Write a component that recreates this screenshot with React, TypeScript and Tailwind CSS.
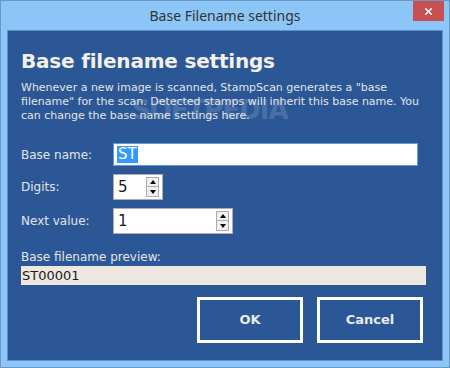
import { X } from "lucide-react";

const ui = { fontFamily: '"DejaVu Sans", Verdana, sans-serif' };

function SpinButtons() {
  return (
    <div className="flex flex-col gap-0">
      <div className="w-[13px] h-[10px] border border-[#adadad] bg-[#f0f0f0] flex items-center justify-center">
        <div className="w-0 h-0 border-x-[3px] border-x-transparent border-b-[4px] border-b-black" />
      </div>
      <div className="w-[13px] h-[10px] border border-t-0 border-[#adadad] bg-[#f0f0f0] flex items-center justify-center">
        <div className="w-0 h-0 border-x-[3px] border-x-transparent border-t-[4px] border-t-black" />
      </div>
    </div>
  );
}

function Spinner({ value, width }: { value: string; width: string }) {
  return (
    <div className={`${width} h-[26px] bg-white border border-[#abadb3] flex items-center justify-between pl-[4px] pr-[3px]`}>
      <span className="text-[15px] text-[#1a1a1a] leading-none">{value}</span>
      <SpinButtons />
    </div>
  );
}

export default function App() {
  return (
    <div className="w-[450px] h-[368px] bg-[#8cc6f7] border border-[#6b97c4] flex flex-col overflow-hidden" style={ui}>
      {/* title bar */}
      <div className="relative h-[29px] flex items-center justify-center">
        <span className="text-[14px] text-[#333]" style={{ fontFamily: '"Noto Sans", sans-serif' }}>
          Base Filename settings
        </span>
        <div className="absolute right-[5px] top-0 w-[31px] h-[20px] bg-[#c75050] flex items-center justify-center">
          <X className="w-[11px] h-[11px] text-white" strokeWidth={3.5} />
        </div>
      </div>

      {/* content panel */}
      <div className="relative mx-[6px] h-[331px] bg-[#2b5797] border border-[#5e8fcf] pl-[13px] pr-[17px] text-[#e4e4e4]">
        <h1 className="mt-[18px] text-[20px] font-bold leading-[24px] tracking-[-0.2px] text-[#f4f0ec]">
          Base filename settings
        </h1>
        <p className="mt-[8px] text-[11px] leading-[14px]">
          Whenever a new image is scanned, StampScan generates a "base
          <br />
          filename" for the scan. Detected stamps will inherit this base name. You
          <br />
          can change the base name settings here.
        </p>

        {/* watermark */}
        <div className="absolute left-[124px] top-[60px] text-[26px] font-bold tracking-[-1px] text-white/[0.14] select-none pointer-events-none">
          SOFTPEDIA
        </div>

        <div className="mt-[20px] flex flex-col gap-[8px] text-[12px]">
          <div className="flex items-center">
            <span className="w-[92px]">Base name:</span>
            <div className="w-[305px] h-[23px] bg-white border border-[#569de5] flex items-center pl-[3px]">
              <span className="bg-[#3399ff] text-white text-[15px] leading-[17px] px-[1px]">ST</span>
            </div>
          </div>
          <div className="flex items-center">
            <span className="w-[92px]">Digits:</span>
            <Spinner value="5" width="w-[50px]" />
          </div>
          <div className="flex items-center">
            <span className="w-[92px]">Next value:</span>
            <Spinner value="1" width="w-[120px]" />
          </div>
        </div>

        <div className="mt-[14px] text-[12px]">Base filename preview:</div>
        <div className="mt-0 w-[405px] h-[19px] bg-[#efe7e1] text-[#1a1a1a] text-[13px] leading-[19px] pl-[1px]">
          ST00001
        </div>

        <div className="mt-[12px] flex justify-end gap-[14px] pr-[2px]">
          <button className="w-[106px] h-[46px] border-[3px] border-white text-[13px] font-bold text-[#eaeaea]">OK</button>
          <button className="w-[106px] h-[46px] border-[3px] border-white text-[13px] font-bold text-[#eaeaea]">Cancel</button>
        </div>
      </div>
    </div>
  );
}
